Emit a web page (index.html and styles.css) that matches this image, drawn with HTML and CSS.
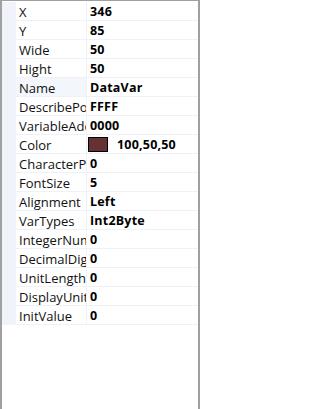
FILE: index.html
```
<!DOCTYPE html>
<html>
<head>
<meta charset="utf-8">
<link rel="stylesheet" href="styles.css">
</head>
<body>
<div class="panel">
  <div class="grid">
    <div class="row"><div class="gut"></div><div class="label">X</div><div class="value">346</div></div>
    <div class="row"><div class="gut"></div><div class="label">Y</div><div class="value">85</div></div>
    <div class="row"><div class="gut"></div><div class="label">Wide</div><div class="value">50</div></div>
    <div class="row"><div class="gut"></div><div class="label">Hight</div><div class="value">50</div></div>
    <div class="row"><div class="gut"></div><div class="label sel">Name</div><div class="value">DataVar</div></div>
    <div class="row"><div class="gut"></div><div class="label">DescribePos</div><div class="value">FFFF</div></div>
    <div class="row"><div class="gut"></div><div class="label">VariableAddr</div><div class="value">0000</div></div>
    <div class="row"><div class="gut"></div><div class="label">Color</div><div class="value"><span class="swatch"></span><span class="ctext">100,50,50</span></div></div>
    <div class="row"><div class="gut"></div><div class="label">CharacterPos</div><div class="value">0</div></div>
    <div class="row"><div class="gut"></div><div class="label">FontSize</div><div class="value">5</div></div>
    <div class="row"><div class="gut"></div><div class="label">Alignment</div><div class="value">Left</div></div>
    <div class="row"><div class="gut"></div><div class="label">VarTypes</div><div class="value">Int2Byte</div></div>
    <div class="row"><div class="gut"></div><div class="label">IntegerNum</div><div class="value">0</div></div>
    <div class="row"><div class="gut"></div><div class="label">DecimalDigits</div><div class="value">0</div></div>
    <div class="row"><div class="gut"></div><div class="label">UnitLength</div><div class="value">0</div></div>
    <div class="row"><div class="gut"></div><div class="label">DisplayUnit</div><div class="value">0</div></div>
    <div class="row"><div class="gut"></div><div class="label">InitValue</div><div class="value">0</div></div>
  </div>
</div>
</body>
</html>
```
FILE: styles.css
```
html, body {
  margin: 0;
  padding: 0;
  background: #ffffff;
}
.panel {
  box-sizing: border-box;
  width: 200px;
  height: 409px;
  border-top: 1px solid #a0a0a0;
  border-left: 2px solid #a0a0a0;
  border-right: 2px solid #a0a0a0;
  padding-top: 1px;
  background: #ffffff;
  font-family: "Open Sans", "Noto Sans", sans-serif;
  font-size: 13px;
  color: #000000;
  overflow: hidden;
}
.grid {
  display: flex;
  flex-direction: column;
}
.row {
  display: flex;
  height: 19px;
}
.gut {
  width: 14px;
  flex: none;
  background: #f0f4fa;
}
.label {
  box-sizing: border-box;
  width: 71px;
  flex: none;
  padding-left: 3px;
  padding-top: 2px;
  border-right: 1px solid #eef2f8;
  border-bottom: 1px solid #eef2f8;
  white-space: nowrap;
  overflow: hidden;
  text-overflow: clip;
  line-height: 16px;
  color: #111111;
}
.label.sel {
  background: #f3f6fb;
}
.value {
  box-sizing: border-box;
  flex: 1;
  min-width: 0;
  padding-left: 3px;
  padding-top: 2px;
  border-bottom: 1px solid #eef2f8;
  font-size: 12.5px;
  font-weight: 700;
  letter-spacing: 0.2px;
  line-height: 16px;
  white-space: nowrap;
  overflow: hidden;
  display: flex;
  align-items: center;
}
.swatch {
  box-sizing: border-box;
  width: 20px;
  height: 15px;
  margin-left: -2px;
  margin-top: -1px;
  border: 1px solid #000000;
  background: #643232;
  flex: none;
}
.ctext {
  margin-left: 9px;
}
```
